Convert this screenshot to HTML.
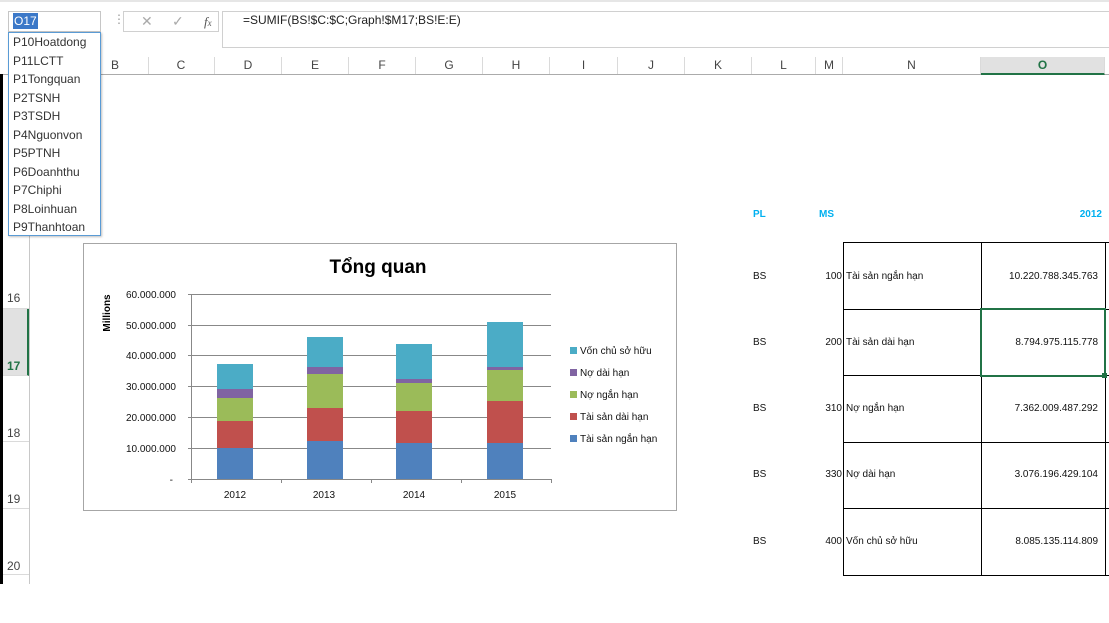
<!DOCTYPE html>
<html><head><meta charset="utf-8"><style>
body{margin:0;width:1109px;height:584px;overflow:hidden;background:#fff;font-family:"Liberation Sans",sans-serif;position:relative}
.a{position:absolute}
.ch{position:absolute;top:57px;height:17px;font-size:12px;color:#444;text-align:center;line-height:17px;border-right:1px solid #dadada}
.rh{position:absolute;left:3px;width:26px;font-size:12px;color:#444;text-align:left;padding-left:4px;box-sizing:border-box;border-bottom:1px solid #dadada}
.cal{font-family:"Liberation Sans",sans-serif;font-size:10px;color:#111}
.dd div{height:18.5px;line-height:18.5px;font-size:12px;color:#333;padding-left:4px}
</style></head><body>
<div class="a" style="left:0;top:0;width:1109px;height:2px;background:#e6e6e6"></div>
<!-- name box -->
<div class="a" style="left:8px;top:11px;width:93px;height:21px;border:1px solid #c6c6c6;box-sizing:border-box"></div>
<div class="a" style="left:13px;top:13px;font-size:12px;color:#fff;background:#3b78c8;padding:0 1px;line-height:16px">O17</div>
<div class="a" style="left:113px;top:12px;color:#999;font-size:12px">⋮</div>
<div class="a" style="left:123px;top:11px;width:96px;height:21px;border:1px solid #d0d0d0;box-sizing:border-box;color:#aaa;font-size:14px;line-height:19px">
 <span style="position:absolute;left:17px">✕</span><span style="position:absolute;left:48px">✓</span><span style="position:absolute;left:80px;font-style:italic;font-family:'Liberation Serif',serif;color:#555;font-size:13px">f<span style="font-size:9px">x</span></span></div>
<div class="a" style="left:222px;top:11px;width:887px;height:37px;border:1px solid #d0d0d0;border-right:none;box-sizing:border-box"></div>
<div class="a" style="left:243px;top:13px;font-size:12px;color:#222">=SUMIF(BS!$C:$C;Graph!$M17;BS!E:E)</div>
<!-- column headers -->
<div class="a" style="left:0;top:56px;width:1109px;height:18px;background:#fff;border-bottom:1px solid #ababab"></div>
<div class="ch" style="left:82px;width:66px">B</div>
<div class="ch" style="left:148px;width:66px">C</div>
<div class="ch" style="left:215px;width:66px">D</div>
<div class="ch" style="left:282px;width:66px">E</div>
<div class="ch" style="left:349px;width:66px">F</div>
<div class="ch" style="left:416px;width:66px">G</div>
<div class="ch" style="left:483px;width:66px">H</div>
<div class="ch" style="left:550px;width:67px">I</div>
<div class="ch" style="left:618px;width:66px">J</div>
<div class="ch" style="left:685px;width:66px">K</div>
<div class="ch" style="left:752px;width:63px">L</div>
<div class="ch" style="left:816px;width:26px">M</div>
<div class="ch" style="left:843px;width:137px">N</div>
<div class="ch" style="left:981px;width:123px;background:#e1e1e1;color:#217346;font-weight:bold;border-bottom:2px solid #217346;height:16px">O</div>
<!-- row headers -->
<div class="a" style="left:0;top:74px;width:3px;height:510px;background:#000"></div>
<div class="a" style="left:29px;top:74px;width:1px;height:510px;background:#c8c8c8"></div>
<div class="rh" style="top:243px;height:66px;line-height:110px">16</div>
<div class="rh" style="top:309px;height:67px;line-height:114px;background:#e1e1e1;color:#217346;font-weight:bold;border-right:2px solid #217346">17</div>
<div class="rh" style="top:376px;height:66px;line-height:114px">18</div>
<div class="rh" style="top:442px;height:67px;line-height:114px">19</div>
<div class="rh" style="top:509px;height:66px;line-height:114px">20</div>
<!-- table -->
<div class="a cal" style="left:753px;top:209px;color:#00b0f0;font-weight:bold">PL</div>
<div class="a cal" style="left:819px;top:209px;color:#00b0f0;font-weight:bold">MS</div>
<div class="a cal" style="left:1060px;top:209px;width:42px;text-align:right;color:#00b0f0;font-weight:bold">2012</div>
<div class="a" style="left:843px;top:242px;width:266px;height:333px;border-top:1px solid #000"></div>
<svg class="a" style="left:0;top:0" width="1109" height="584">
<g stroke="#000" stroke-width="1">
<line x1="843.5" y1="242" x2="843.5" y2="575"/><line x1="981.5" y1="242" x2="981.5" y2="575"/><line x1="1105.5" y1="242" x2="1105.5" y2="575"/>
<line x1="843" y1="242.5" x2="1109" y2="242.5"/><line x1="843" y1="309.5" x2="1109" y2="309.5"/><line x1="843" y1="375.5" x2="1109" y2="375.5"/><line x1="843" y1="442.5" x2="1109" y2="442.5"/><line x1="843" y1="508.5" x2="1109" y2="508.5"/><line x1="843" y1="575.5" x2="1109" y2="575.5"/>
</g>
<rect x="981" y="309" width="124" height="67" fill="none" stroke="#217346" stroke-width="2"/>
<rect x="1102" y="373" width="5" height="5" fill="#217346"/>
</svg>
<div class="a cal" style="left:753px;top:271px">BS</div><div class="a cal" style="left:800px;top:271px;width:42px;text-align:right">100</div><div class="a cal" style="left:846px;top:271px">Tài sản ngắn hạn</div><div class="a cal" style="left:990px;top:271px;width:108px;text-align:right">10.220.788.345.763</div>
<div class="a cal" style="left:753px;top:337px">BS</div><div class="a cal" style="left:800px;top:337px;width:42px;text-align:right">200</div><div class="a cal" style="left:846px;top:337px">Tài sản dài hạn</div><div class="a cal" style="left:990px;top:337px;width:108px;text-align:right">8.794.975.115.778</div>
<div class="a cal" style="left:753px;top:403px">BS</div><div class="a cal" style="left:800px;top:403px;width:42px;text-align:right">310</div><div class="a cal" style="left:846px;top:403px">Nợ ngắn hạn</div><div class="a cal" style="left:990px;top:403px;width:108px;text-align:right">7.362.009.487.292</div>
<div class="a cal" style="left:753px;top:469px">BS</div><div class="a cal" style="left:800px;top:469px;width:42px;text-align:right">330</div><div class="a cal" style="left:846px;top:469px">Nợ dài hạn</div><div class="a cal" style="left:990px;top:469px;width:108px;text-align:right">3.076.196.429.104</div>
<div class="a cal" style="left:753px;top:536px">BS</div><div class="a cal" style="left:800px;top:536px;width:42px;text-align:right">400</div><div class="a cal" style="left:846px;top:536px">Vốn chủ sở hữu</div><div class="a cal" style="left:990px;top:536px;width:108px;text-align:right">8.085.135.114.809</div>
<!-- chart -->
<svg class="a" style="left:83px;top:243px" width="594" height="268" font-family="Liberation Sans, sans-serif">
<rect x="0.5" y="0.5" width="593" height="267" fill="#fff" stroke="#a6a6a6"/>
<text x="295" y="30" font-size="19" font-weight="bold" text-anchor="middle" fill="#000">Tổng quan</text>
<g stroke="#888" stroke-width="1">
<line x1="105" y1="51.5" x2="468" y2="51.5"/><line x1="105" y1="82.5" x2="468" y2="82.5"/><line x1="105" y1="112.5" x2="468" y2="112.5"/><line x1="105" y1="143.5" x2="468" y2="143.5"/><line x1="105" y1="174.5" x2="468" y2="174.5"/><line x1="105" y1="205.5" x2="468" y2="205.5"/><line x1="105" y1="236.5" x2="468" y2="236.5"/>
<line x1="108.5" y1="51" x2="108.5" y2="236"/>
<line x1="108.5" y1="236" x2="108.5" y2="240"/><line x1="198.5" y1="236" x2="198.5" y2="240"/><line x1="288.5" y1="236" x2="288.5" y2="240"/><line x1="378.5" y1="236" x2="378.5" y2="240"/><line x1="468.5" y1="236" x2="468.5" y2="240"/>
</g>
<g font-size="10" text-anchor="end" fill="#111">
<text x="93" y="55">60.000.000</text><text x="93" y="86">50.000.000</text><text x="93" y="116">40.000.000</text><text x="93" y="147">30.000.000</text><text x="93" y="178">20.000.000</text><text x="93" y="209">10.000.000</text><text x="90" y="240">-</text>
</g>
<text transform="translate(27,70) rotate(-90)" font-size="10" font-weight="bold" text-anchor="middle">Millions</text>
<g font-size="10" text-anchor="middle" fill="#111">
<text x="152" y="255">2012</text><text x="241" y="255">2013</text><text x="331" y="255">2014</text><text x="422" y="255">2015</text>
</g>
<g>
<rect x="134" y="205" width="36" height="31" fill="#4f81bd"/><rect x="134" y="178" width="36" height="27" fill="#c0504d"/><rect x="134" y="155" width="36" height="23" fill="#9bbb59"/><rect x="134" y="146" width="36" height="9" fill="#8064a2"/><rect x="134" y="121" width="36" height="25" fill="#4bacc6"/>
<rect x="224" y="198" width="36" height="38" fill="#4f81bd"/><rect x="224" y="165" width="36" height="33" fill="#c0504d"/><rect x="224" y="131" width="36" height="34" fill="#9bbb59"/><rect x="224" y="124" width="36" height="7" fill="#8064a2"/><rect x="224" y="94" width="36" height="30" fill="#4bacc6"/>
<rect x="313" y="200" width="36" height="36" fill="#4f81bd"/><rect x="313" y="168" width="36" height="32" fill="#c0504d"/><rect x="313" y="140" width="36" height="28" fill="#9bbb59"/><rect x="313" y="136" width="36" height="4" fill="#8064a2"/><rect x="313" y="101" width="36" height="35" fill="#4bacc6"/>
<rect x="404" y="200" width="36" height="36" fill="#4f81bd"/><rect x="404" y="158" width="36" height="42" fill="#c0504d"/><rect x="404" y="127" width="36" height="31" fill="#9bbb59"/><rect x="404" y="124" width="36" height="3" fill="#8064a2"/><rect x="404" y="79" width="36" height="45" fill="#4bacc6"/>
</g>
<g font-size="10" fill="#111">
<rect x="487" y="104" width="7" height="7" fill="#4bacc6"/><text x="497" y="111">Vốn chủ sở hữu</text>
<rect x="487" y="126" width="7" height="7" fill="#8064a2"/><text x="497" y="133">Nợ dài hạn</text>
<rect x="487" y="148" width="7" height="7" fill="#9bbb59"/><text x="497" y="155">Nợ ngắn hạn</text>
<rect x="487" y="170" width="7" height="7" fill="#c0504d"/><text x="497" y="177">Tài sản dài hạn</text>
<rect x="487" y="192" width="7" height="7" fill="#4f81bd"/><text x="497" y="199">Tài sản ngắn hạn</text>
</g>
</svg>
<!-- dropdown -->
<div class="a dd" style="left:8px;top:32px;width:93px;height:204px;border:1px solid #5a9bd5;box-sizing:border-box;background:#fff;box-shadow:1px 1px 2px rgba(0,0,0,.25)">
<div>P10Hoatdong</div><div>P11LCTT</div><div>P1Tongquan</div><div>P2TSNH</div><div>P3TSDH</div><div>P4Nguonvon</div><div>P5PTNH</div><div>P6Doanhthu</div><div>P7Chiphi</div><div>P8Loinhuan</div><div>P9Thanhtoan</div>
</div>
</body></html>
